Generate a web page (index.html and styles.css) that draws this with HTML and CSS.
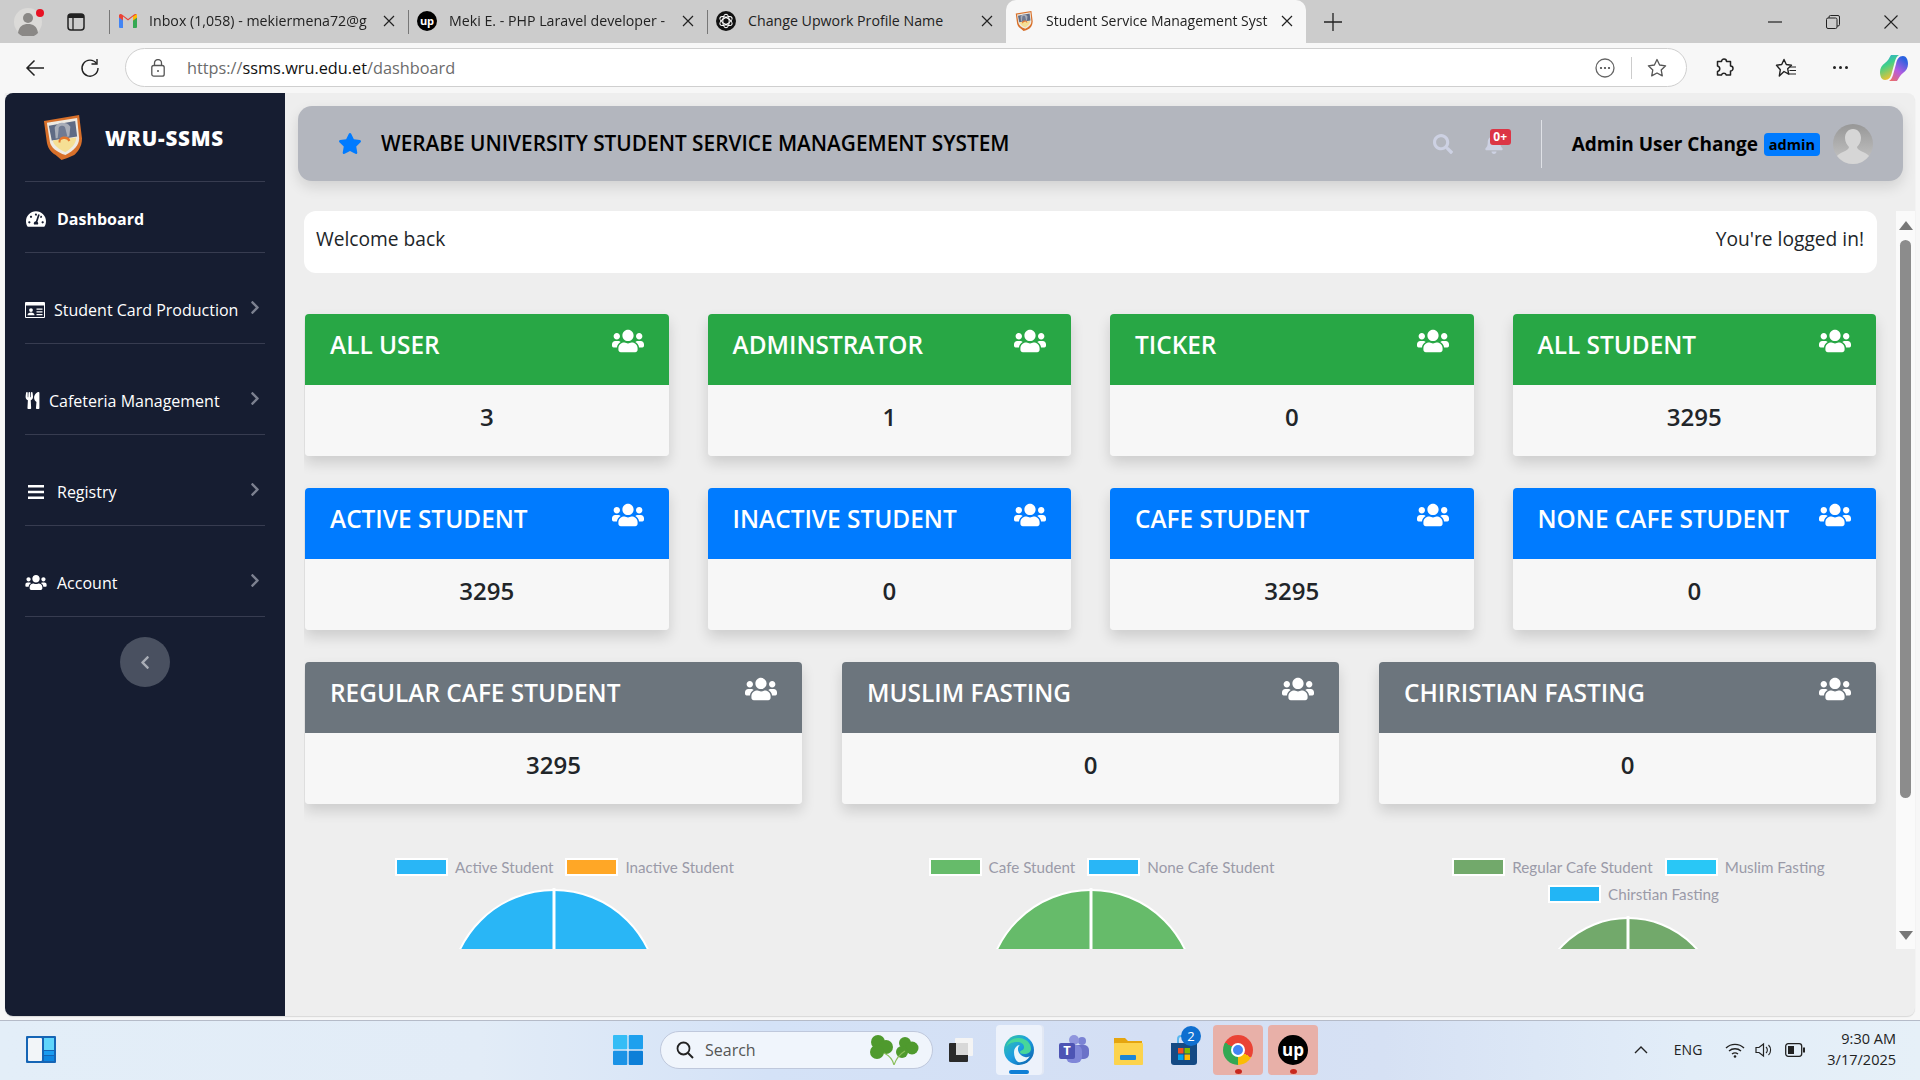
FILE: index.html
```html
<!DOCTYPE html>
<html lang="en">
<head>
    <meta charset="UTF-8">
    <meta name="viewport" content="width=device-width, initial-scale=1.0">
    <title>Student Service Management System</title>
    <link rel="stylesheet" href="styles.css">
</head>
<body>
    <svg class="defs" aria-hidden="true">
        <defs>
            <symbol id="i-users" viewBox="0 0 640 512"><path d="M96 224c35.3 0 64-28.7 64-64s-28.7-64-64-64-64 28.7-64 64 28.7 64 64 64zm448 0c35.3 0 64-28.7 64-64s-28.7-64-64-64-64 28.7-64 64 28.7 64 64 64zm32 32h-64c-17.6 0-33.5 7.1-45.1 18.6 40.3 22.1 68.9 62 75.1 109.4h66c17.7 0 32-14.3 32-32v-32c0-35.3-28.7-64-64-64zm-256 0c61.9 0 112-50.1 112-112S381.9 32 320 32 208 82.1 208 144s50.1 112 112 112zm76.8 32h-8.3c-20.8 10-43.9 16-68.5 16s-47.6-6-68.5-16h-8.3C179.6 288 128 339.6 128 403.2V432c0 26.5 21.5 48 48 48h288c26.5 0 48-21.5 48-48v-28.8c0-63.6-51.6-115.2-115.2-115.2zm-223.7-13.4C161.5 263.1 145.6 256 128 256H64c-35.3 0-64 28.7-64 64v32c0 17.7 14.3 32 32 32h65.9c6.3-47.4 34.9-87.3 75.2-109.4z"/></symbol>
            <symbol id="i-star" viewBox="0 0 576 512"><path d="M259.3 17.8L194 150.2 47.9 171.5c-26.2 3.8-36.7 36.1-17.7 54.6l105.7 103-25 145.5c-4.5 26.3 23.2 46 46.4 33.7L288 439.6l130.7 68.7c23.2 12.2 50.9-7.4 46.4-33.7l-25-145.5 105.7-103c19-18.5 8.5-50.8-17.7-54.6L382 150.2 316.7 17.8c-11.7-23.6-45.6-23.9-57.4 0z"/></symbol>
            <symbol id="i-search" viewBox="0 0 512 512"><path d="M505 442.7L405.3 343c-4.5-4.5-10.6-7-17-7H372c27.6-35.3 44-79.7 44-128C416 93.1 322.9 0 208 0S0 93.1 0 208s93.1 208 208 208c48.3 0 92.7-16.4 128-44v16.3c0 6.4 2.5 12.5 7 17l99.7 99.7c9.4 9.4 24.6 9.4 33.9 0l28.3-28.3c9.4-9.4 9.4-24.6.1-34zM208 336c-70.7 0-128-57.2-128-128 0-70.7 57.2-128 128-128 70.7 0 128 57.2 128 128 0 70.7-57.2 128-128 128z"/></symbol>
            <symbol id="i-bell" viewBox="0 0 448 512"><path d="M224 512c35.32 0 63.97-28.65 63.97-64H160.03c0 35.35 28.65 64 63.97 64zm215.39-149.71c-19.32-20.76-55.47-51.99-55.47-154.29 0-77.7-54.48-139.9-127.94-155.16V32c0-17.67-14.32-32-31.98-32s-31.98 14.33-31.98 32v20.84C118.56 68.1 64.08 130.3 64.08 208c0 102.3-36.15 133.53-55.47 154.29-6 6.45-8.66 14.16-8.61 21.71.11 16.4 12.98 32 32.1 32h383.8c19.12 0 32-15.6 32.1-32 .05-7.55-2.61-15.27-8.61-21.71z"/></symbol>
            <symbol id="i-right" viewBox="0 0 320 512"><path d="M285.476 272.971L91.132 467.314c-9.373 9.373-24.569 9.373-33.941 0l-22.667-22.667c-9.357-9.357-9.375-24.522-.04-33.901L188.505 256 34.484 101.255c-9.335-9.379-9.317-24.544.04-33.901l22.667-22.667c9.373-9.373 24.569-9.373 33.941 0L285.475 239.03c9.373 9.372 9.373 24.568.001 33.941z"/></symbol>
            <symbol id="i-left" viewBox="0 0 320 512"><path d="M34.52 239.03L228.87 44.69c9.37-9.37 24.57-9.37 33.94 0l22.67 22.67c9.36 9.36 9.37 24.52.04 33.9L131.49 256l154.02 154.75c9.34 9.38 9.32 24.54-.04 33.9l-22.67 22.67c-9.37 9.37-24.57 9.37-33.94 0L34.52 272.97c-9.37-9.37-9.37-24.57 0-33.94z"/></symbol>
            <symbol id="i-gauge" viewBox="0 0 576 512"><path d="M288 32C128.94 32 0 160.94 0 320c0 52.8 14.25 102.26 39.06 144.8 5.61 9.62 16.3 15.2 27.44 15.2h443c11.14 0 21.83-5.58 27.44-15.2C561.75 422.26 576 372.8 576 320c0-159.06-128.94-288-288-288zm0 64c14.71 0 26.58 10.13 30.32 23.65-1.11 2.26-2.64 4.23-3.45 6.67l-9.22 27.67c-5.13 3.49-10.97 6.01-17.64 6.01-17.67 0-32-14.33-32-32S270.33 96 288 96zM96 384c-17.67 0-32-14.33-32-32s14.33-32 32-32 32 14.33 32 32-14.33 32-32 32zm48-160c-17.67 0-32-14.33-32-32s14.33-32 32-32 32 14.33 32 32-14.33 32-32 32zm246.77-72.41l-61.33 184C343.13 347.33 352 364.54 352 384c0 11.72-3.38 22.55-8.88 32H232.88c-5.5-9.45-8.88-20.28-8.88-32 0-33.94 26.5-61.43 59.9-63.59l61.34-184.01c4.17-12.56 17.73-19.45 30.36-15.17 12.57 4.19 19.35 17.79 15.17 30.36zm14.66 57.2l15.52-46.55c3.47-1.29 7.13-2.23 11.05-2.23 17.67 0 32 14.33 32 32s-14.33 32-32 32c-11.38-.01-20.89-6.28-26.57-15.22zM480 384c-17.67 0-32-14.33-32-32s14.33-32 32-32 32 14.33 32 32-14.33 32-32 32z"/></symbol>
            <symbol id="i-utensils" viewBox="0 0 416 512"><path d="M207.9 15.2c.8 4.7 16.1 94.5 16.1 128.8 0 52.3-27.8 89.6-68.9 104.6L168 486.7c.7 13.7-10.2 25.3-24 25.3H80c-13.7 0-24.7-11.5-24-25.3l12.9-238.1C27.7 233.6 0 196.2 0 144 0 109.6 15.3 19.9 16.1 15.2 19.3-5.1 61.4-5.4 64 16.3v141.2c1.3 3.4 15.1 3.2 16 0 1.4-25.3 7.9-139.2 8-141.8 3.3-20.8 44.7-20.8 47.9 0 .2 2.7 6.6 116.5 8 141.8.9 3.2 14.8 3.4 16 0V16.3c2.6-21.6 44.8-21.4 48-1.1zm119.2 285.7l-15 185.1c-1.2 14 9.9 26 23.9 26h56c13.3 0 24-10.7 24-24V24c0-13.2-10.7-24-24-24-82.5 0-221.4 178.5-64.9 300.9z"/></symbol>
            <symbol id="i-idcard" viewBox="0 0 20 16"><path fill-rule="evenodd" d="M1 0h18a1 1 0 0 1 1 1v14a1 1 0 0 1-1 1H1a1 1 0 0 1-1-1V1a1 1 0 0 1 1-1zm0 3.500V15h18V3.500zM6 6.200a1.900 1.900 0 1 1 0 3.800 1.900 1.900 0 0 1 0-3.800zM2.500 13.300c0-1.900 1.500-2.700 3.500-2.700s3.500.8 3.500 2.700zM11.500 6.500h6v1.300h-6zm0 2.700h6v1.300h-6zm0 2.700h6v1.300h-6z"/></symbol>
            <symbol id="i-shield" viewBox="0 0 42 46">
                <path d="M2 6 L38 0 L41 24 C41 33 36 38 33 41 L26 44 L20 46 L14 41 C8 37 6 33 5 28 Z" fill="#d8702a"/>
                <path d="M5 8 L36 3 L38 24 C38 31 33 36 24 41 C15 38 9 33 8 27 Z" fill="#eeeae2"/>
                <path d="M7 11 L34 6 L36 22 L10 26 Z" fill="#5f6b85"/>
                <path d="M13 13 C15 9 18 8 21 8 C24 8 27 9 29 12 L28 22 L14 24 Z" fill="#a8adb8"/>
                <path d="M17 15 a3.500 3.500 0 0 1 7 -1 L26 22 L16 24 Z" fill="#6f7a92"/>
                <path d="M11 26 L35 23 C35 30 30 34 24 38 C17 35 12 31 11 26 Z" fill="#f5df94"/>
                <path d="M17 28 a6 5 0 0 1 12 -2 L27 27 a4 3 0 0 0 -8 1 Z" fill="#e4762b"/>
            </symbol>
            <symbol id="i-gmail" viewBox="0 0 18 14">
                <path d="M0 3 L0 13 a1 1 0 0 0 1 1 H4 V6 Z" fill="#4285f4"/>
                <path d="M18 3 L18 13 a1 1 0 0 1 -1 1 H14 V6 Z" fill="#34a853"/>
                <path d="M0 1.500 C0 0 2 -.5 3 .5 L9 5 L15 .5 C16 -.5 18 0 18 1.500 V3.500 L14 6.500 V2.500 L9 6.500 L4 2.500 V6.500 L0 3.500 Z" fill="#ea4335"/>
                <path d="M14 2.500 L18 0 V3.500 L14 6.500 Z" fill="#fbbc04"/>
            </symbol>
            <symbol id="i-openai" viewBox="0 0 20 20">
                <circle cx="10" cy="10" r="10" fill="#111"/>
                <g fill="none" stroke="#fff" stroke-width="1.100">
                    <ellipse cx="10" cy="10" rx="3.200" ry="6.800"/>
                    <ellipse cx="10" cy="10" rx="3.200" ry="6.800" transform="rotate(60 10 10)"/>
                    <ellipse cx="10" cy="10" rx="3.200" ry="6.800" transform="rotate(120 10 10)"/>
                </g>
            </symbol>
            <symbol id="i-close" viewBox="0 0 12 12"><path d="M1 1l10 10M11 1L1 11" stroke="#222" stroke-width="1.200"/></symbol>
            <linearGradient id="g-edge" x1="0" y1="0" x2="1" y2="1">
                <stop offset="0" stop-color="#35c7a2"/>
                <stop offset=".5" stop-color="#1b9de2"/>
                <stop offset="1" stop-color="#0c59a4"/>
            </linearGradient>
            <linearGradient id="g-cop-a" x1="0" y1="0" x2=".4" y2="1">
                <stop offset="0" stop-color="#2a9fe8"/>
                <stop offset=".45" stop-color="#3fd08a"/>
                <stop offset="1" stop-color="#f2c230"/>
            </linearGradient>
            <linearGradient id="g-cop-b" x1=".6" y1="0" x2="0" y2="1">
                <stop offset="0" stop-color="#2a62e0"/>
                <stop offset=".5" stop-color="#b45ce0"/>
                <stop offset="1" stop-color="#f2705c"/>
            </linearGradient>
        </defs>
    </svg>

    <div class="tabbar">
        <div class="profile">
            <svg class="profile-pic" viewBox="0 0 28 28"><circle cx="14" cy="14" r="14" fill="#dbdad8"/><circle cx="14" cy="10" r="5" fill="#8a8886"/><path d="M4 25c1-7 5-9 10-9s9 2 10 9a14 14 0 0 1-20 0z" fill="#8a8886"/></svg>
            <span class="profile-dot"></span>
        </div>
        <svg class="tabs-toggle" viewBox="0 0 18 18"><rect x="1" y="1" width="16" height="16" rx="3" fill="none" stroke="#222" stroke-width="1.500"/><path d="M1 4 a3 3 0 0 1 3-3 h10 a3 3 0 0 1 3 3 v1 H1z" fill="#222"/><path d="M6 5v12" stroke="#222" stroke-width="1.300"/></svg>
        <div class="tab">
            <svg class="favicon favicon-gmail"><use href="#i-gmail"/></svg>
            <span class="tab-title">Inbox (1,058) - mekiermena72@g</span>
            <svg class="tab-close"><use href="#i-close"/></svg>
        </div>
        <div class="tab">
            <span class="up-logo">up</span>
            <span class="tab-title">Meki E. - PHP Laravel developer -</span>
            <svg class="tab-close"><use href="#i-close"/></svg>
        </div>
        <div class="tab">
            <svg class="favicon"><use href="#i-openai"/></svg>
            <span class="tab-title tab-title-full">Change Upwork Profile Name</span>
            <svg class="tab-close"><use href="#i-close"/></svg>
        </div>
        <div class="tab tab-active">
            <svg class="favicon"><use href="#i-shield"/></svg>
            <span class="tab-title">Student Service Management Syst</span>
            <svg class="tab-close"><use href="#i-close"/></svg>
        </div>
        <svg class="new-tab" viewBox="0 0 18 18"><path d="M9 0v18M0 9h18" stroke="#222" stroke-width="1.300"/></svg>
        <div class="window-controls">
            <svg viewBox="0 0 14 14"><path d="M0 7h14" stroke="#222" stroke-width="1.200"/></svg>
            <svg viewBox="0 0 14 14"><path d="M3 3V2a1.500 1.500 0 0 1 1.500-1.500H12A1.500 1.500 0 0 1 13.500 2v7.500A1.500 1.500 0 0 1 12 11h-1" fill="none" stroke="#222"/><rect x=".5" y="3" width="10.500" height="10.500" rx="1.500" fill="none" stroke="#222"/></svg>
            <svg viewBox="0 0 14 14"><path d="M.5.500l13 13M13.500.500l-13 13" stroke="#222" stroke-width="1.100"/></svg>
        </div>
    </div>

    <div class="toolbar">
        <svg class="tool tool-back" viewBox="0 0 20 20"><path d="M19 10H2M9.500 2.500L2 10l7.500 7.500" fill="none" stroke="#222" stroke-width="1.500"/></svg>
        <svg class="tool tool-reload" viewBox="0 0 20 20"><path d="M16.500 5.500A8 8 0 1 0 18 10" fill="none" stroke="#222" stroke-width="1.400"/><path d="M11.500 6h5.500V1" fill="none" stroke="#222" stroke-width="1.400"/></svg>
        <div class="address">
            <svg class="lock" viewBox="0 0 14 18"><rect x=".8" y="6.500" width="12.400" height="10.700" rx="2" fill="none" stroke="#555" stroke-width="1.300"/><path d="M3.500 6.500V4a3.500 3.500 0 0 1 7 0v2.500" fill="none" stroke="#555" stroke-width="1.300"/><circle cx="7" cy="12" r="1" fill="#555"/></svg>
            <span class="url"><span class="url-dim">https://</span>ssms.wru.edu.et<span class="url-dim">/dashboard</span></span>
            <svg class="addr-icon" viewBox="0 0 20 20"><circle cx="10" cy="10" r="9" fill="none" stroke="#666" stroke-width="1.300"/><circle cx="6" cy="10" r="1.100" fill="#444"/><circle cx="10" cy="10" r="1.100" fill="#444"/><circle cx="14" cy="10" r="1.100" fill="#444"/></svg>
            <span class="addr-sep"></span>
            <svg class="addr-icon" viewBox="0 0 20 20"><path d="M10 1.500l2.600 5.500 6 .8-4.400 4.100 1.100 6-5.300-2.900-5.300 2.900 1.100-6L1.400 7.800l6-.8z" fill="none" stroke="#555" stroke-width="1.300" stroke-linejoin="round"/></svg>
        </div>
        <svg class="tool tool-ext" viewBox="0 0 20 20"><path d="M7.500 3.500a2.500 2.500 0 0 1 5 0h4v4.500a2.500 2.500 0 0 1 0 5v4h-4.200a2.500 2.500 0 0 0-4.800 0H3.500v-3.500a2.800 2.800 0 0 0 0-5.500V3.500z" fill="none" stroke="#222" stroke-width="1.500" stroke-linejoin="round"/></svg>
        <span class="tool-sep"></span>
        <svg class="tool tool-fav" viewBox="0 0 22 20"><path d="M9 1.500l2.300 5 5.200.7-3.800 3.600 1 5.300L9 13.500 4.300 18l1-6.200L1.500 7.200l5.200-.7z" fill="none" stroke="#222" stroke-width="1.400" stroke-linejoin="round"/><path d="M15 9h6M14.500 12.500h6.500M13.500 16h7.500" stroke="#222" stroke-width="1.200"/></svg>
        <div class="tool-dots"><span></span><span></span><span></span></div>
        <svg class="tool tool-copilot" viewBox="0 0 28 28"><path d="M11 1h8c-2 1-3 3-4 6l-3 11c-1 5-3 8-7 8-3 0-5-3-5-8 0-4 2-7 5-9 3-2 4-5 6-8z" fill="url(#g-cop-a)"/><path d="M17 27H9c2-1 3-3 4-6l3-11c1-5 3-8 7-8 3 0 5 3 5 8 0 4-2 7-5 9-3 2-4 5-6 8z" fill="url(#g-cop-b)"/></svg>
    </div>

    <div class="page">
        <aside class="sidebar">
            <div class="brand">
                <svg class="brand-logo"><use href="#i-shield"/></svg>
                <span class="brand-name">WRU-SSMS</span>
            </div>
            <nav>
                <a class="nav-item nav-active">
                    <svg class="nav-icon icon-gauge"><use href="#i-gauge"/></svg>
                    <span>Dashboard</span>
                </a>
                <a class="nav-item">
                    <svg class="nav-icon icon-card"><use href="#i-idcard"/></svg>
                    <span>Student Card Production</span>
                    <svg class="nav-arrow"><use href="#i-right"/></svg>
                </a>
                <a class="nav-item">
                    <svg class="nav-icon icon-utensils"><use href="#i-utensils"/></svg>
                    <span>Cafeteria Management</span>
                    <svg class="nav-arrow"><use href="#i-right"/></svg>
                </a>
                <a class="nav-item">
                    <svg class="nav-icon icon-bars" viewBox="0 0 16 14"><path d="M0 1.200h16M0 7h16M0 12.800h16" stroke="#fff" stroke-width="2.400"/></svg>
                    <span>Registry</span>
                    <svg class="nav-arrow"><use href="#i-right"/></svg>
                </a>
                <a class="nav-item">
                    <svg class="nav-icon icon-users"><use href="#i-users"/></svg>
                    <span>Account</span>
                    <svg class="nav-arrow"><use href="#i-right"/></svg>
                </a>
            </nav>
            <button class="collapse"><svg><use href="#i-left"/></svg></button>
        </aside>

        <main class="main">
            <header class="topbar">
                <svg class="topbar-star"><use href="#i-star"/></svg>
                <h1>WERABE UNIVERSITY STUDENT SERVICE MANAGEMENT SYSTEM</h1>
                <svg class="topbar-search"><use href="#i-search"/></svg>
                <div class="bell">
                    <svg><use href="#i-bell"/></svg>
                    <span class="bell-count">0+</span>
                </div>
                <span class="topbar-sep"></span>
                <span class="user-name">Admin User Change</span>
                <span class="role">admin</span>
                <svg class="avatar" viewBox="0 0 40 40"><defs><linearGradient id="g-av" x1="0" y1="0" x2="0" y2="1"><stop offset="0" stop-color="#979797"/><stop offset="1" stop-color="#c6c6c6"/></linearGradient></defs><circle cx="20" cy="20" r="20" fill="url(#g-av)"/><path d="M20 5c5 0 8 4 8 9 0 4-2 7-4 9 0 2 2 3 6 5 3 1 5 3 6 4a20 20 0 0 1-32 0c1-1 3-3 6-4 4-2 6-3 6-5-2-2-4-5-4-9 0-5 3-9 8-9z" fill="#d6d6d6"/></svg>
            </header>

            <div class="scroller">
                <div class="content">
                    <div class="welcome">
                        <span>Welcome back</span>
                        <span>You're logged in!</span>
                    </div>

                    <div class="cards cards-four">
                        <div class="card card-green">
                            <div class="card-head"><span>ALL USER</span><svg><use href="#i-users"/></svg></div>
                            <div class="card-body">3</div>
                        </div>
                        <div class="card card-green">
                            <div class="card-head"><span>ADMINSTRATOR</span><svg><use href="#i-users"/></svg></div>
                            <div class="card-body">1</div>
                        </div>
                        <div class="card card-green">
                            <div class="card-head"><span>TICKER</span><svg><use href="#i-users"/></svg></div>
                            <div class="card-body">0</div>
                        </div>
                        <div class="card card-green">
                            <div class="card-head"><span>ALL STUDENT</span><svg><use href="#i-users"/></svg></div>
                            <div class="card-body">3295</div>
                        </div>
                        <div class="card card-blue">
                            <div class="card-head"><span>ACTIVE STUDENT</span><svg><use href="#i-users"/></svg></div>
                            <div class="card-body">3295</div>
                        </div>
                        <div class="card card-blue">
                            <div class="card-head"><span>INACTIVE STUDENT</span><svg><use href="#i-users"/></svg></div>
                            <div class="card-body">0</div>
                        </div>
                        <div class="card card-blue">
                            <div class="card-head"><span>CAFE STUDENT</span><svg><use href="#i-users"/></svg></div>
                            <div class="card-body">3295</div>
                        </div>
                        <div class="card card-blue">
                            <div class="card-head"><span>NONE CAFE STUDENT</span><svg><use href="#i-users"/></svg></div>
                            <div class="card-body">0</div>
                        </div>
                    </div>

                    <div class="cards cards-three">
                        <div class="card card-grey">
                            <div class="card-head"><span>REGULAR CAFE STUDENT</span><svg><use href="#i-users"/></svg></div>
                            <div class="card-body">3295</div>
                        </div>
                        <div class="card card-grey">
                            <div class="card-head"><span>MUSLIM FASTING</span><svg><use href="#i-users"/></svg></div>
                            <div class="card-body">0</div>
                        </div>
                        <div class="card card-grey">
                            <div class="card-head"><span>CHIRISTIAN FASTING</span><svg><use href="#i-users"/></svg></div>
                            <div class="card-body">0</div>
                        </div>
                    </div>

                    <div class="charts">
                        <div class="chart">
                            <div class="legend">
                                <span class="legend-item"><i class="swatch sw-sky"></i>Active Student</span>
                                <span class="legend-item"><i class="swatch sw-orange"></i>Inactive Student</span>
                            </div>
                            <svg class="pie" viewBox="0 0 212 212"><circle cx="106" cy="106" r="104" fill="#29b6f6" stroke="#fff" stroke-width="2"/><path d="M106 0v212" stroke="#fff" stroke-width="3"/></svg>
                        </div>
                        <div class="chart">
                            <div class="legend">
                                <span class="legend-item"><i class="swatch sw-green"></i>Cafe Student</span>
                                <span class="legend-item"><i class="swatch sw-sky"></i>None Cafe Student</span>
                            </div>
                            <svg class="pie" viewBox="0 0 212 212"><circle cx="106" cy="106" r="104" fill="#66bb6a" stroke="#fff" stroke-width="2"/><path d="M106 0v212" stroke="#fff" stroke-width="3"/></svg>
                        </div>
                        <div class="chart">
                            <div class="legend">
                                <span class="legend-item"><i class="swatch sw-moss"></i>Regular Cafe Student</span>
                                <span class="legend-item"><i class="swatch sw-cyan"></i>Muslim Fasting</span>
                                <span class="legend-item legend-last"><i class="swatch sw-azure"></i>Chirstian Fasting</span>
                            </div>
                            <svg class="pie pie-small" viewBox="0 0 188 188"><circle cx="94" cy="94" r="92" fill="#72a96b" stroke="#fff" stroke-width="2"/><path d="M94 0v188" stroke="#fff" stroke-width="3"/></svg>
                        </div>
                    </div>
                </div>

                <div class="scrollbar">
                    <span class="scroll-up"></span>
                    <span class="scroll-thumb"></span>
                    <span class="scroll-down"></span>
                </div>
            </div>
        </main>
    </div>

    <footer class="taskbar">
        <svg class="widgets" viewBox="0 0 30 27"><rect width="30" height="27" rx="1" fill="#1565b5"/><rect x="2" y="2" width="14" height="23" rx="1" fill="#f2f5f8"/><rect x="18" y="2" width="10" height="12" fill="#5fd5fb"/><rect x="18" y="15" width="10" height="4" fill="#1a9cf0"/><rect x="18" y="20" width="10" height="5" fill="#0e86e0"/></svg>
        <svg class="start" viewBox="0 0 30 30"><rect width="14.300" height="14.300" rx="1" fill="#35bdf6"/><rect x="15.700" width="14.300" height="14.300" rx="1" fill="#1ea0ee"/><rect y="15.700" width="14.300" height="14.300" rx="1" fill="#1b93e6"/><rect x="15.700" y="15.700" width="14.300" height="14.300" rx="1" fill="#0d7fd8"/></svg>
        <div class="search">
            <svg class="search-icon" viewBox="0 0 18 18"><circle cx="7.500" cy="7.500" r="6" fill="none" stroke="#222" stroke-width="1.800"/><path d="M12 12l5 5" stroke="#222" stroke-width="2"/></svg>
            <span class="search-text">Search</span>
            <svg class="clover" viewBox="0 0 50 30"><g fill="#4f9a2e"><circle cx="9" cy="7" r="7"/><circle cx="17" cy="12" r="7"/><circle cx="8" cy="17" r="7"/><circle cx="36" cy="8" r="6"/><circle cx="43" cy="13" r="6.500"/><circle cx="33" cy="17" r="6"/></g><path d="M15 18c6 3 9 7 10 12M36 16c-5 3-9 8-11 14" fill="none" stroke="#8bbf5c" stroke-width="1.200"/></svg>
        </div>
        <svg class="taskview" viewBox="0 0 24 24"><rect x="6" width="18" height="18" rx="1" fill="#f4f4f4"/><rect y="5" width="19" height="19" rx="1" fill="#2a2a2a"/><rect x="7" y="5" width="12" height="12" fill="#d8d8d8"/></svg>
        <div class="app app-edge">
            <svg class="app-icon" viewBox="0 0 30 30"><circle cx="15" cy="15" r="15" fill="url(#g-edge)"/><path d="M2 13C4 5 10 3 15 3c7 0 12 5 12 11 0 3-3 5-7 5-3 0-4-1-4-2 0-2 4-1 4-5 0-3-3-5-7-5C8 7 3 9 2 13z" fill="#47d79a"/><path d="M10 17c0-4 3-7 6-7-4 3-2 10 5 12 2 .5 4 0 5-1-3 5-8 7-12 6-3-2-4-6-4-10z" fill="#e9f6fb"/></svg>
            <span class="app-running"></span>
        </div>
        <svg class="app-icon app-teams" viewBox="0 0 30 30"><circle cx="23" cy="6" r="4" fill="#7b83d4"/><circle cx="15" cy="5" r="5" fill="#8f95dd"/><rect x="14" y="10" width="16" height="14" rx="5" fill="#6b72c8"/><rect x="7" y="10" width="16" height="18" rx="6" fill="#7f86d8"/><rect y="8" width="16" height="16" rx="2" fill="#4d54b4"/><text class="teams-t" x="8" y="20">T</text></svg>
        <svg class="app-icon app-folder" viewBox="0 0 30 30"><path d="M1 3h11l3 3h14v22H1z" fill="#e5a50f"/><rect x="1" y="8" width="29" height="22" rx="1" fill="#fcd34d"/><rect x="7" y="20" width="16" height="5" rx="1" fill="#1b85d6"/></svg>
        <div class="app-store">
            <svg class="app-icon" viewBox="0 0 30 30"><path d="M2 8h26v19a3 3 0 0 1-3 3H5a3 3 0 0 1-3-3z" fill="#144a84"/><path d="M9 8V4a3 3 0 0 1 3-3h6a3 3 0 0 1 3 3v4" fill="none" stroke="#5bb8f0" stroke-width="2"/><rect x="9" y="13" width="5.500" height="5.500" fill="#f25022"/><rect x="15.500" y="13" width="5.500" height="5.500" fill="#7fba00"/><rect x="9" y="19.500" width="5.500" height="5.500" fill="#00a4ef"/><rect x="15.500" y="19.500" width="5.500" height="5.500" fill="#ffb900"/></svg>
            <span class="store-badge">2</span>
        </div>
        <div class="app app-alert">
            <span class="chrome"></span>
            <span class="app-dot"></span>
        </div>
        <div class="app app-alert">
            <span class="up-logo up-logo-big">up</span>
            <span class="app-dot"></span>
        </div>
        <div class="tray">
            <svg class="tray-up" viewBox="0 0 14 8"><path d="M1 7l6-6 6 6" fill="none" stroke="#222" stroke-width="1.400"/></svg>
            <span class="tray-lang">ENG</span>
            <svg class="tray-wifi" viewBox="0 0 20 16"><path d="M1 6a13 13 0 0 1 18 0M4 9a9 9 0 0 1 12 0M7 12a5 5 0 0 1 6 0" fill="none" stroke="#222" stroke-width="1.400"/><circle cx="10" cy="14.500" r="1.300" fill="#222"/></svg>
            <svg class="tray-vol" viewBox="0 0 18 16"><path d="M1 5.500h3L8.500 2v12L4 10.500H1z" fill="none" stroke="#222" stroke-width="1.200"/><path d="M11 5a4 4 0 0 1 0 6M13.500 3a7 7 0 0 1 0 10" fill="none" stroke="#222" stroke-width="1.100"/></svg>
            <svg class="tray-bat" viewBox="0 0 20 14"><rect x=".7" y=".7" width="16" height="12.600" rx="2.500" fill="none" stroke="#222" stroke-width="1.300"/><rect x="3" y="3" width="6" height="8" fill="#222"/><rect x="18" y="4.500" width="2" height="5" fill="#222"/></svg>
            <div class="clock"><span>9:30 AM</span><span>3/17/2025</span></div>
        </div>
    </footer>
</body>
</html>
```

FILE: styles.css
```css
* {
    box-sizing: border-box;
}
html, body {
    margin: 0;
    height: 1080px;
    overflow: hidden;
}
body {
    display: flex;
    flex-direction: column;
    font-family: "Open Sans", "Noto Sans", sans-serif;
    color: #212529;
    background-color: #f7f7f7;
}
.defs {
    position: absolute;
    width: 0;
    height: 0;
}
svg {
    display: block;
    flex: none;
}

/* browser tabs */
.tabbar {
    display: flex;
    align-items: center;
    height: 43px;
    flex: none;
    background-color: #cccccc;
}
.profile {
    position: relative;
    width: 28px;
    height: 28px;
    margin-left: 14px;
}
.profile-pic {
    width: 28px;
    height: 28px;
}
.profile-dot {
    position: absolute;
    top: 1px;
    right: -2px;
    width: 8px;
    height: 8px;
    border-radius: 50%;
    background-color: #e81123;
}
.tabs-toggle {
    width: 18px;
    height: 18px;
    margin-left: 25px;
    margin-right: 24px;
}
.tab {
    display: flex;
    align-items: center;
    width: 299px;
    height: 43px;
    padding: 0 11px 2px 9px;
    position: relative;
    font-size: 14.2px;
    color: #222;
}
.tab::before {
    content: "";
    position: absolute;
    left: 0;
    top: 10px;
    height: 24px;
    width: 1px;
    background-color: #777;
}
.tab-active {
    width: 300px;
    padding-left: 8px;
    background-color: #f7f7f7;
    border-radius: 10px 10px 0 0;
}
.tab-active::before {
    display: none;
}
.tab-active .tab-title {
    font-size: 14px;
}
.favicon {
    width: 20px;
    height: 20px;
}
.favicon-gmail {
    width: 18px;
    height: 14px;
    margin-left: 1px;
}
.tab-title {
    flex: 1;
    margin-left: 12px;
    white-space: nowrap;
    -webkit-mask-image: linear-gradient(to left, transparent 0, #000 16px);
    mask-image: linear-gradient(to left, transparent 0, #000 16px);
}
.tab-title-full {
    -webkit-mask-image: none;
    mask-image: none;
}
.tab-close {
    width: 12px;
    height: 12px;
    margin-right: 2px;
}
.up-logo {
    display: flex;
    align-items: center;
    justify-content: center;
    flex: none;
    width: 20px;
    height: 20px;
    border-radius: 50%;
    background-color: #000;
    color: #fff;
    font-size: 11px;
    font-weight: 700;
    line-height: 1;
}
.up-logo-big {
    width: 30px;
    height: 30px;
    font-size: 17px;
}
.new-tab {
    width: 18px;
    height: 18px;
    margin-left: 18px;
}
.window-controls {
    display: flex;
    margin-left: auto;
    margin-right: 22px;
    gap: 44px;
}
.window-controls svg {
    width: 14px;
    height: 14px;
}

/* browser toolbar */
.toolbar {
    display: flex;
    align-items: center;
    height: 50px;
    flex: none;
    padding: 0 15px 1px 25px;
}
.tool-back {
    width: 20px;
    height: 20px;
}
.tool-reload {
    width: 20px;
    height: 20px;
    margin-left: 35px;
    margin-right: 25px;
}
.address {
    display: flex;
    align-items: center;
    width: 1562px;
    height: 39px;
    flex: none;
    padding: 0 19px 0 25px;
    background-color: #fff;
    border: 1.5px solid #cfcfcf;
    border-radius: 20px;
}
.lock {
    width: 14px;
    height: 18px;
}
.url {
    flex: 1;
    margin-left: 22px;
    font-size: 16.3px;
    color: #111;
}
.url-dim {
    color: #6b6b6b;
}
.addr-icon {
    width: 20px;
    height: 20px;
}
.addr-sep {
    width: 1px;
    height: 22px;
    margin: 0 15.5px;
    background-color: #ccc;
}
.tool-ext {
    width: 20px;
    height: 20px;
    margin-left: 27px;
}
.tool-sep {
    width: 1px;
    height: 22px;
    margin: 0 20px 0 21px;
    background-color: #ccc;
}
.tool-fav {
    width: 22px;
    height: 20px;
}
.tool-dots {
    display: flex;
    gap: 3px;
    margin-left: 36px;
}
.tool-dots span {
    width: 3px;
    height: 3px;
    border-radius: 50%;
    background-color: #222;
}
.tool-copilot {
    width: 28px;
    height: 28px;
    margin-left: 32px;
}

/* page */
.page {
    display: flex;
    flex: 1;
    min-height: 0;
    margin: 0 5px 4px;
    background-color: #eeeeee;
    border-radius: 0 8px 8px 8px;
    box-shadow: 0 1px 1px #d8d8d8;
}
.sidebar {
    display: flex;
    flex-direction: column;
    width: 280px;
    flex: none;
    padding: 0 20px;
    background-color: #161d31;
    border-radius: 8px 0 0 8px;
    color: #fff;
}
.brand {
    display: flex;
    align-items: center;
    height: 89px;
    padding-left: 17px;
    padding-top: 1px;
    border-bottom: 1px solid #373c50;
}
.brand-logo {
    width: 41px;
    height: 45px;
}
.brand-name {
    margin-left: 22px;
    font-size: 20.5px;
    font-weight: 800;
    letter-spacing: .8px;
}
.nav-item {
    display: flex;
    align-items: center;
    height: 91px;
    padding-top: 23px;
    font-size: 16px;
    color: #fff;
    border-bottom: 1px solid #373c50;
}
.nav-active {
    height: 71px;
    padding-top: 3px;
    font-weight: 700;
}
.nav-icon {
    fill: #fff;
}
.icon-gauge {
    width: 20px;
    height: 18px;
    margin-left: 1px;
    margin-right: 11px;
}
.icon-card {
    width: 20px;
    height: 16px;
    margin-right: 9px;
}
.icon-utensils {
    width: 15px;
    height: 17px;
    margin-right: 9px;
}
.icon-bars {
    width: 16px;
    height: 14px;
    margin-left: 3px;
    margin-right: 13px;
}
.icon-users {
    width: 22px;
    height: 17px;
    margin-right: 10px;
}
.nav-arrow {
    width: 10px;
    height: 15px;
    margin-left: auto;
    margin-right: 5px;
    margin-top: -4px;
    fill: #7c8190;
}
.collapse {
    display: flex;
    align-items: center;
    justify-content: center;
    width: 50px;
    height: 50px;
    margin: 20px 0 0 95px;
    padding: 0;
    border: none;
    border-radius: 50%;
    background-color: #495060;
}
.collapse svg {
    width: 10px;
    height: 15px;
    fill: #a9adb6;
}

.main {
    display: flex;
    flex-direction: column;
    flex: 1;
    min-width: 0;
}
.topbar {
    display: flex;
    align-items: center;
    height: 75px;
    flex: none;
    margin: 13px 12px 0 13px;
    padding: 0 30px 0 40px;
    background-color: #b3b6be;
    border-radius: 14px;
    box-shadow: 0 6px 14px rgba(0, 0, 0, .12);
}
.topbar-star {
    width: 24px;
    height: 21px;
    fill: #007bff;
}
h1 {
    margin: -2px 0 0 19px;
    font-size: 20.8px;
    font-weight: 600;
    color: #000;
    white-space: nowrap;
}
.topbar-search {
    width: 20px;
    height: 20px;
    margin-left: auto;
    fill: #cdd1e3;
}
.bell {
    position: relative;
    width: 18px;
    height: 20px;
    margin-left: 32px;
    fill: #cdd1e3;
}
.bell svg {
    width: 18px;
    height: 20px;
}
.bell-count {
    position: absolute;
    top: -5px;
    left: 5px;
    width: 21px;
    height: 16px;
    border-radius: 3px;
    background-color: #dc3545;
    color: #fff;
    font-size: 12px;
    font-weight: 700;
    line-height: 16px;
    text-align: center;
}
.topbar-sep {
    width: 1px;
    height: 48px;
    margin: 0 30px 0 38px;
    background-color: #dfe1e6;
}
.user-name {
    font-size: 19px;
    font-weight: 700;
    color: #000;
}
.role {
    margin-left: 6px;
    padding: 0 5px;
    height: 23px;
    margin-top: 2px;
    border-radius: 4px;
    background-color: #007bff;
    color: #000;
    font-size: 14.5px;
    font-weight: 700;
    line-height: 23px;
}
.avatar {
    width: 40px;
    height: 40px;
    margin-left: 13px;
}

.scroller {
    display: flex;
    flex: 1;
    min-height: 0;
    max-height: 738px;
    margin: 30px 0 0 19px;
    overflow: hidden;
}
.content {
    width: 1573px;
    flex: none;
}
.welcome {
    display: flex;
    justify-content: space-between;
    align-items: center;
    height: 62px;
    padding: 0 13px 7px 12px;
    background-color: #fff;
    border-radius: 12px;
    font-size: 19.2px;
}
.cards {
    display: grid;
    margin: 0 1px;
    row-gap: 32px;
}
.cards-four {
    margin-top: 41px;
    grid-template-columns: repeat(4, 1fr);
    column-gap: 39px;
}
.cards-three {
    margin-top: 32px;
    grid-template-columns: repeat(3, 1fr);
    column-gap: 40px;
}
.card {
    height: 142px;
    border-radius: 4px;
    overflow: hidden;
    box-shadow: 0 7px 14px rgba(0, 0, 0, .14);
}
.card-head {
    display: flex;
    justify-content: space-between;
    height: 71px;
    padding: 14px 25px 0 25px;
    color: #fff;
    font-size: 24.4px;
    font-weight: 600;
    line-height: 34px;
    white-space: nowrap;
}
.card-head svg {
    width: 32px;
    height: 26px;
    fill: #fff;
}
.card-green .card-head {
    background-color: #28a745;
}
.card-blue .card-head {
    background-color: #007bff;
}
.card-grey .card-head {
    background-color: #6c757d;
}
.card-body {
    height: 71px;
    background-color: #f7f7f7;
    font-size: 24px;
    font-weight: 550;
    line-height: 64px;
    text-align: center;
}

.charts {
    display: grid;
    grid-template-columns: repeat(3, 1fr);
    column-gap: 40px;
    margin: 52px 1px 0;
}
.chart {
    display: flex;
    flex-direction: column;
    align-items: center;
}
.legend {
    display: flex;
    flex-wrap: wrap;
    justify-content: center;
    gap: 5px 12px;
    width: 420px;
    padding-left: 22px;
    font-family: Lato, sans-serif;
    font-size: 15.2px;
    color: #9a9aa8;
    line-height: 22px;
}
.legend-item {
    display: flex;
    align-items: center;
    white-space: nowrap;
}
.legend-last {
    margin-right: 10px;
}
.swatch {
    width: 53px;
    height: 18px;
    margin-right: 7px;
    border: 2px solid #fff;
}
.sw-sky { background-color: #29b6f6; }
.sw-orange { background-color: #ffa726; }
.sw-green { background-color: #66bb6a; }
.sw-moss { background-color: #72a96b; }
.sw-cyan { background-color: #29c7f6; }
.sw-azure { background-color: #22b5f5; }
.pie {
    width: 212px;
    height: 212px;
    margin-top: 10px;
}
.pie-small {
    width: 188px;
    height: 188px;
    margin-top: 11px;
}

.scrollbar {
    display: flex;
    flex-direction: column;
    align-items: center;
    width: 19px;
    margin-left: 19px;
    padding: 10px 0 9px;
    background-color: #fafafa;
}
.scroll-up {
    width: 0;
    height: 0;
    border: 7px solid transparent;
    border-top: none;
    border-bottom: 9px solid #777;
}
.scroll-thumb {
    width: 11px;
    height: 558px;
    margin-top: 10px;
    border-radius: 6px;
    background-color: #8c8c8c;
}
.scroll-down {
    width: 0;
    height: 0;
    margin-top: auto;
    border: 7px solid transparent;
    border-bottom: none;
    border-top: 9px solid #777;
}

/* windows taskbar */
.taskbar {
    display: flex;
    align-items: center;
    height: 60px;
    flex: none;
    padding: 0 0 2px 26px;
    border-top: 1px solid #b5bbc8;
    background: linear-gradient(90deg, #e3eef8 0%, #e2ecf7 25%, #d4e2f7 40%, #d4dff4 60%, #d6e1f4 72%, #e2edf8 88%, #e6f0f8 100%);
}
.widgets {
    width: 30px;
    height: 27px;
}
.start {
    width: 30px;
    height: 30px;
    margin-left: 557px;
}
.search {
    display: flex;
    align-items: center;
    width: 273px;
    height: 38px;
    margin-left: 17px;
    padding: 0 13px 0 15px;
    border-radius: 19px;
    border: 1px solid #bfc8dc;
    background-color: #f0f5fc;
}
.search-icon {
    width: 18px;
    height: 18px;
}
.search-text {
    flex: 1;
    margin-left: 11px;
    font-size: 16px;
    color: #555;
}
.clover {
    width: 50px;
    height: 30px;
}
.taskview {
    width: 24px;
    height: 24px;
    margin-left: 16px;
}
.app {
    position: relative;
    display: flex;
    align-items: center;
    justify-content: center;
    height: 50px;
    border-radius: 4px;
}
.app-edge {
    width: 46px;
    margin-left: 23px;
    background-color: #edf2fb;
    box-shadow: 2px 0 0 #e2e8f4;
}
.app-icon {
    width: 30px;
    height: 30px;
}
.app-running {
    position: absolute;
    bottom: 1px;
    left: 13px;
    width: 20px;
    height: 4px;
    border-radius: 2px;
    background-color: #0f7fd6;
}
.app-teams {
    margin-left: 17px;
}
.teams-t {
    fill: #fff;
    font-size: 13px;
    font-weight: 700;
    text-anchor: middle;
}
.app-folder {
    margin-left: 24px;
}
.app-store {
    position: relative;
    margin-left: 26px;
}
.store-badge {
    position: absolute;
    top: -9px;
    right: -2px;
    width: 20px;
    height: 20px;
    border-radius: 50%;
    background-color: #0f6fd0;
    color: #fff;
    font-size: 13px;
    line-height: 20px;
    text-align: center;
}
.app-alert {
    width: 50px;
    margin-left: 14px;
    background-color: #e8b0a8;
}
.app-alert + .app-alert {
    margin-left: 5px;
}
.chrome {
    position: relative;
    width: 30px;
    height: 30px;
    border-radius: 50%;
    background: conic-gradient(#ea4335 0 120deg, #fbbc04 120deg 180deg, #34a853 180deg 300deg, #ea4335 300deg);
}
.chrome::after {
    content: "";
    position: absolute;
    inset: 8px;
    border-radius: 50%;
    background-color: #4285f4;
    border: 2px solid #fff;
}
.app-dot {
    position: absolute;
    bottom: 1px;
    left: 22px;
    width: 7px;
    height: 5px;
    border-radius: 50%;
    background-color: #c8281e;
}
.tray {
    display: flex;
    align-items: center;
    margin-left: auto;
    padding-right: 24px;
    color: #222;
}
.tray-up {
    width: 14px;
    height: 8px;
}
.tray-lang {
    margin-left: 26px;
    font-size: 14px;
}
.tray-wifi {
    width: 20px;
    height: 16px;
    margin-left: 23px;
}
.tray-vol {
    width: 18px;
    height: 16px;
    margin-left: 10px;
}
.tray-bat {
    width: 20px;
    height: 14px;
    margin-left: 12px;
}
.clock {
    display: flex;
    flex-direction: column;
    align-items: flex-end;
    margin-left: 22px;
    gap: 1px;
    font-size: 14.5px;
    line-height: 20px;
}
```
